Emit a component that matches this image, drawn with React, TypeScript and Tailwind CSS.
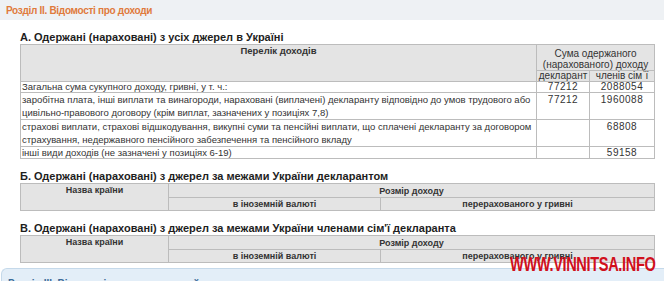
export default function App() {
  const cell = "border border-[#bcbcbc] p-0 align-top";
  const hcell = "border border-[#bcbcbc] p-0 bg-[#e4e4e4] font-bold text-center text-[#333]";
  return (
    <div className="w-[664px] h-[281px] overflow-hidden bg-white relative font-['Liberation_Sans',Arial,sans-serif] text-[#333]">
      <div className="h-[20px] bg-[#eef1f4] pl-[6px] flex items-center text-[#e07a3c] font-bold text-[10px] tracking-[-0.3px]">
        Розділ ІІ. Відомості про доходи
      </div>
      <div className="pl-[20px] pr-[9px]">
        <h3 className="mt-[11px] text-[11px] leading-[13px] font-bold text-[#1e1e1e]">
          А. Одержані (нараховані) з усіх джерел в Україні
        </h3>
        <table className="w-full border-collapse text-[9.5px] table-fixed">
          <colgroup>
            <col />
            <col className="w-[53px]" />
            <col className="w-[65px]" />
          </colgroup>
          <tbody>
            <tr className="h-[26px]">
              <td rowSpan={2} className={hcell + " align-top leading-[12px]"}>Перелік доходів</td>
              <td colSpan={2} className={hcell + " leading-[11px] pt-[2px] font-normal text-[10px]"}>
                Сума одержаного<br />(нарахованого) доходу
              </td>
            </tr>
            <tr className="h-[11px]">
              <td className={hcell + " leading-[10px] font-normal text-[10px]"}>декларант</td>
              <td className={hcell + " leading-[10px] font-normal text-[10px]"}>членів сім`ї</td>
            </tr>
            <tr className="h-[10px]">
              <td className={cell + " leading-[10px] pl-[1px]"}>Загальна сума сукупного доходу, гривні, у т. ч.:</td>
              <td className={cell + " leading-[10px] text-center text-[10px] tracking-[0.5px]"}>77212</td>
              <td className={cell + " leading-[10px] text-center text-[10px] tracking-[0.5px]"}>2088054</td>
            </tr>
            <tr className="h-[27px]">
              <td className={cell + " leading-[13px] pl-[1px]"}>
                заробітна плата, інші виплати та винагороди, нараховані (виплачені) декларанту відповідно до умов трудового або цивільно-правового договору (крім виплат, зазначених у позиціях 7,8)
              </td>
              <td className={cell + " leading-[13px] text-center text-[10px] tracking-[0.5px]"}>77212</td>
              <td className={cell + " leading-[13px] text-center text-[10px] tracking-[0.5px]"}>1960088</td>
            </tr>
            <tr className="h-[27px]">
              <td className={cell + " leading-[13px] pl-[1px]"}>
                страхові виплати, страхові відшкодування, викупні суми та пенсійні виплати, що сплачені декларанту за договором страхування, недержавного пенсійного забезпечення та пенсійного вкладу
              </td>
              <td className={cell}></td>
              <td className={cell + " leading-[13px] text-center text-[10px] tracking-[0.5px]"}>68808</td>
            </tr>
            <tr className="h-[12px]">
              <td className={cell + " leading-[11px] pl-[1px]"}>інші види доходів (не зазначені у позиціях 6-19)</td>
              <td className={cell}></td>
              <td className={cell + " leading-[11px] text-center text-[10px] tracking-[0.5px]"}>59158</td>
            </tr>
          </tbody>
        </table>

        <h3 className="mt-[11px] text-[11px] leading-[13px] font-bold text-[#1e1e1e]">
          Б. Одержані (нараховані) з джерел за межами України декларантом
        </h3>
        <table className="w-full border-collapse text-[9px] table-fixed">
          <colgroup>
            <col className="w-[148px]" />
            <col className="w-[212px]" />
            <col />
          </colgroup>
          <tbody>
            <tr className="h-[14px]">
              <td rowSpan={2} className={hcell + " align-top leading-[12px]"}>Назва країни</td>
              <td colSpan={2} className={hcell + " leading-[12px]"}>Розмір доходу</td>
            </tr>
            <tr className="h-[13px]">
              <td className={hcell + " leading-[12px]"}>в іноземній валюті</td>
              <td className={hcell + " leading-[12px]"}>перерахованого у гривні</td>
            </tr>
          </tbody>
        </table>

        <h3 className="mt-[11px] text-[11px] leading-[13px] font-bold text-[#1e1e1e]">
          В. Одержані (нараховані) з джерел за межами України членами сім'ї декларанта
        </h3>
        <table className="w-full border-collapse text-[9px] table-fixed">
          <colgroup>
            <col className="w-[148px]" />
            <col className="w-[212px]" />
            <col />
          </colgroup>
          <tbody>
            <tr className="h-[14px]">
              <td rowSpan={2} className={hcell + " align-top leading-[12px]"}>Назва країни</td>
              <td colSpan={2} className={hcell + " leading-[12px]"}>Розмір доходу</td>
            </tr>
            <tr className="h-[13px]">
              <td className={hcell + " leading-[12px]"}>в іноземній валюті</td>
              <td className={hcell + " leading-[12px]"}>перерахованого у гривні</td>
            </tr>
          </tbody>
        </table>
      </div>
      <div className="mt-[5px] ml-[1px] h-[20px] bg-[#e3eef8] border-t border-l border-[#c5d9ea] rounded-tl-[6px] pl-[6px] pt-[8px] text-[10px] font-bold text-[#3b6b99] leading-[13px]">
        Розділ ІІІ. Відомості про нерухоме майно
      </div>
      <div className="absolute left-[510px] top-[253px] text-[#d0101c] font-bold text-[20px] leading-[22px] origin-left scale-x-[0.73] tracking-[-0.5px] whitespace-nowrap">
        WWW.VINNITSA.INFO
      </div>
    </div>
  );
}
